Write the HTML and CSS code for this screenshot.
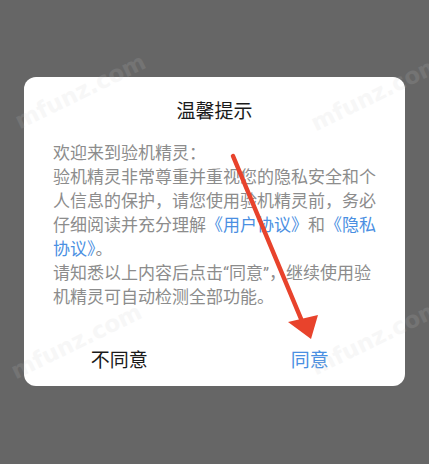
FILE: index.html
```html
<!DOCTYPE HTML>
<html lang="zh-CN">
<head>
    <title>温馨提示</title>
    <link rel="stylesheet" href="styles.css">
</head>
<body>
    <div class="dialog">
        <div class="dialog-title">温馨提示</div>
        <div class="dialog-body">
            <p>欢迎来到验机精灵：</p>
            <p>验机精灵非常尊重并重视您的隐私安全和个人信息的保护，请您使用验机精灵前，务必仔细阅读并充分理解<a href="#">《用户协议》</a>和<a href="#">《隐私协议》</a>。</p>
            <p>请知悉以上内容后点击“同意”，继续使用验机精灵可自动检测全部功能。</p>
        </div>
        <div class="dialog-actions">
            <button class="btn">不同意</button>
            <button class="btn btn-primary">同意</button>
        </div>
    </div>

    <!-- watermarks -->
    <div class="watermark wm-1">mfunz.com</div>
    <div class="watermark wm-2">mfunz.com</div>
    <div class="watermark wm-3">mfunz.com</div>
    <div class="watermark wm-4">mfunz.com</div>

    <!-- annotation arrow -->
    <svg class="arrow" width="429" height="464" viewBox="0 0 429 464">
        <line x1="233" y1="156" x2="304" y2="326" stroke="#e8432c" stroke-width="4.5" stroke-linecap="round"/>
        <polygon points="288,322 318,315 311,339" fill="#e8432c"/>
    </svg>
</body>
</html>
```

FILE: styles.css
```css
html, body {
    margin: 0;
    padding: 0;
}
body {
    width: 429px;
    height: 464px;
    background-color: #666666;
    font-family: Roboto, "Noto Sans CJK SC", sans-serif;
    position: relative;
    overflow: hidden;
}
.dialog {
    margin: 77px 0 0 24px;
    width: 381px;
    background-color: #ffffff;
    border-radius: 12px;
}
.dialog-title {
    padding-top: 23px;
    font-size: 19px;
    line-height: 24px;
    color: #1a1a1a;
    text-align: center;
}
.dialog-body {
    padding: 17px 20px 0 29px;
    font-size: 17px;
    line-height: 24px;
    color: #8c8c8c;
}
.dialog-body p {
    margin: 0;
}
.dialog-body a {
    color: #4a8fe2;
    text-decoration: none;
}
.dialog-actions {
    display: flex;
    margin-top: 21px;
    height: 56px;
}
.btn {
    flex: 1;
    border: none;
    background: none;
    font-family: inherit;
    font-size: 19px;
    color: #1a1a1a;
    padding: 0;
}
.btn-primary {
    color: #4a8fe2;
}
.watermark {
    position: absolute;
    font-family: "DejaVu Sans", sans-serif;
    font-weight: bold;
    font-size: 23px;
    color: #c8c8c8;
    opacity: 0.14;
    transform: rotate(-26deg);
    transform-origin: left bottom;
    white-space: nowrap;
}
.wm-1 { left: 22px; top: 108px; }
.wm-2 { left: 318px; top: 110px; }
.wm-3 { left: 18px; top: 358px; }
.wm-4 { left: 318px; top: 354px; }
.arrow {
    position: absolute;
    left: 0;
    top: 0;
}
```
